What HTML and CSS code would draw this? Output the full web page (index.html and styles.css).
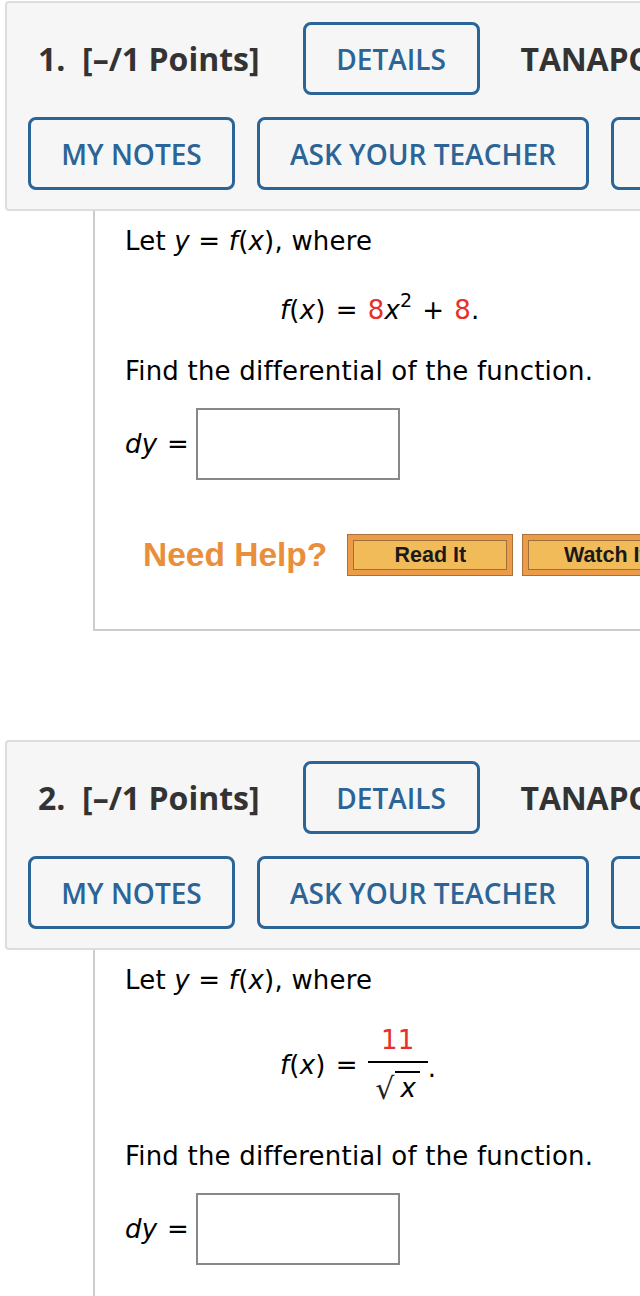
FILE: index.html
```html
<!DOCTYPE html>
<html>
<head>
<meta charset="utf-8">
<link rel="stylesheet" href="styles.css">
</head>
<body>
<div class="page">
  <div class="question">
    <div class="qhead">
      <div class="row1">
        <span class="points">1.&nbsp; [–/1 Points]</span>
        <span class="btn btn-details">DETAILS</span>
        <span class="source">TANAPCALCBR10 6.6.001.</span>
      </div>
      <div class="row2">
        <span class="btn btn-notes">MY NOTES</span>
        <span class="btn btn-ask">ASK YOUR TEACHER</span>
        <span class="btn btn-practice">PRACTICE ANOTHER</span>
      </div>
    </div>
    <div class="qbody q1body">
      <p class="line">Let <i>y</i> = <i>f</i>(<i>x</i>), where</p>
      <p class="formula"><i>f</i>(<i>x</i>)<span class="op">=</span><span class="red">8</span><i>x</i><sup>2</sup><span class="op">+</span><span class="red">8</span>.</p>
      <p class="line find">Find the differential of the function.</p>
      <div class="answer">
        <span class="dy"><i>dy</i></span>
        <span class="eq">=</span>
        <span class="inbox"></span>
      </div>
      <div class="help">
        <span class="need">Need Help?</span>
        <span class="hbtn">Read It</span>
        <span class="hbtn">Watch It</span>
      </div>
    </div>
  </div>

  <div class="question q2">
    <div class="qhead">
      <div class="row1">
        <span class="points">2.&nbsp; [–/1 Points]</span>
        <span class="btn btn-details">DETAILS</span>
        <span class="source">TANAPCALCBR10 6.6.002.</span>
      </div>
      <div class="row2">
        <span class="btn btn-notes">MY NOTES</span>
        <span class="btn btn-ask">ASK YOUR TEACHER</span>
        <span class="btn btn-practice">PRACTICE ANOTHER</span>
      </div>
    </div>
    <div class="qbody">
      <p class="line">Let <i>y</i> = <i>f</i>(<i>x</i>), where</p>
      <div class="formula2">
        <span class="fx"><i>f</i>(<i>x</i>)<span class="op">=</span></span>
        <span class="frac">
          <span class="num red">11</span>
          <span class="den"><span class="rad">√</span><span class="radarg"><i>x</i></span></span>
        </span>
        <span class="dot">.</span>
      </div>
      <p class="line find2">Find the differential of the function.</p>
      <div class="answer">
        <span class="dy"><i>dy</i></span>
        <span class="eq">=</span>
        <span class="inbox"></span>
      </div>
    </div>
  </div>
</div>
</body>
</html>
```
FILE: styles.css
```css
html, body {
  margin: 0;
  padding: 0;
  background: #ffffff;
  overflow: hidden;
}
.page {
  width: 1100px;
  padding-left: 5px;
  padding-top: 1px;
}
.question {
  width: 1095px;
}
.q2 {
  margin-top: 109px;
}
.qhead {
  background: #f6f6f6;
  border: 2px solid #dddddd;
  border-radius: 4px;
  padding: 19px 0 19px 21px;
  font-family: "Open Sans", sans-serif;
}
.row1 {
  display: flex;
  align-items: center;
  height: 73px;
}
.points {
  margin-left: 10px;
  font-size: 32px;
  font-weight: 700;
  color: #333333;
  letter-spacing: 0;
  white-space: nowrap;
}
.source {
  margin-left: 41px;
  font-size: 32px;
  font-weight: 700;
  color: #333333;
  letter-spacing: -0.2px;
  white-space: nowrap;
}
.row2 {
  display: flex;
  gap: 22px;
  margin-top: 22px;
}
.btn {
  box-sizing: border-box;
  height: 73px;
  display: flex;
  align-items: center;
  justify-content: center;
  border: 3px solid #2b6496;
  border-radius: 8px;
  color: #2b6496;
  font-size: 28px;
  font-weight: 600;
  letter-spacing: 0;
  white-space: nowrap;
  background: transparent;
}
.btn-details {
  margin-left: 43px;
  width: 177px;
  flex: none;
}
.btn-notes { width: 207px; flex: none; }
.btn-ask { width: 332px; flex: none; }
.btn-practice { width: 380px; flex: none; }

.qbody {
  margin-left: 88px;
  border-left: 2px solid #cccccc;
  padding-left: 30px;
  padding-top: 14px;
  font-family: "DejaVu Sans", Verdana, sans-serif;
  font-size: 26px;
  letter-spacing: 0.2px;
  color: #000000;
  height: 400px;
}
.q1body {
  border-bottom: 2px solid #cccccc;
  height: 404px;
}
.line {
  margin: 0;
  line-height: 32px;
}
.formula {
  margin: 37px 0 0 155px;
  line-height: 32px;
}
.op {
  margin: 0 10px;
}
.formula sup {
  font-size: 19px;
  vertical-align: 12px;
  line-height: 0;
}
.red { color: #e8302a; }
.find { margin-top: 29px; }
.answer {
  display: flex;
  align-items: center;
  margin-top: 21px;
}
.dy {
  width: 42px;
}
.eq {
  width: 29px;
}
.inbox {
  box-sizing: border-box;
  width: 204px;
  height: 72px;
  border: 2px solid #888888;
  background: #ffffff;
}
.help {
  display: flex;
  align-items: center;
  margin-top: 54px;
  margin-left: 18px;
}
.need {
  font-family: "Liberation Sans", Arial, sans-serif;
  font-weight: 700;
  font-size: 33.5px;
  letter-spacing: 0;
  color: #e98e3a;
  margin-right: 20px;
}
.hbtn {
  box-sizing: border-box;
  width: 166px;
  height: 42px;
  margin-right: 9px;
  border: 1px solid #a8733a;
  background: #ec9c48;
  display: flex;
  flex: none;
  font-family: "Liberation Sans", Arial, sans-serif;
  font-weight: 700;
  font-size: 21.5px;
  letter-spacing: 0;
  color: #1a1a1a;
  align-items: center;
  justify-content: center;
  box-shadow: inset 0 0 0 5px #ec9c48, inset 0 0 0 6px #a0703a, inset 0 0 0 30px #f2bb5a;
}
.formula2 {
  display: flex;
  align-items: center;
  margin: 27px 0 0 155px;
  height: 84px;
}
.frac {
  display: inline-flex;
  flex-direction: column;
  align-items: center;
  margin-left: 0;
  width: 60px;
}
.num {
  border-bottom: 2px solid #000;
  width: 100%;
  text-align: center;
  line-height: 34px;
  padding-bottom: 4px;
}
.den {
  display: flex;
  align-items: flex-end;
  height: 44px;
  padding-top: 4px;
  box-sizing: border-box;
}
.rad {
  font-size: 30px;
  line-height: 36px;
  color: #222;
}
.radarg {
  border-top: 2px solid #000;
  line-height: 30px;
  padding: 0 4px 0 6px;
  margin-bottom: 4px;
}
.dot { align-self: center; margin-top: 6px; }
.find2 { margin-top: 33px; }
```
